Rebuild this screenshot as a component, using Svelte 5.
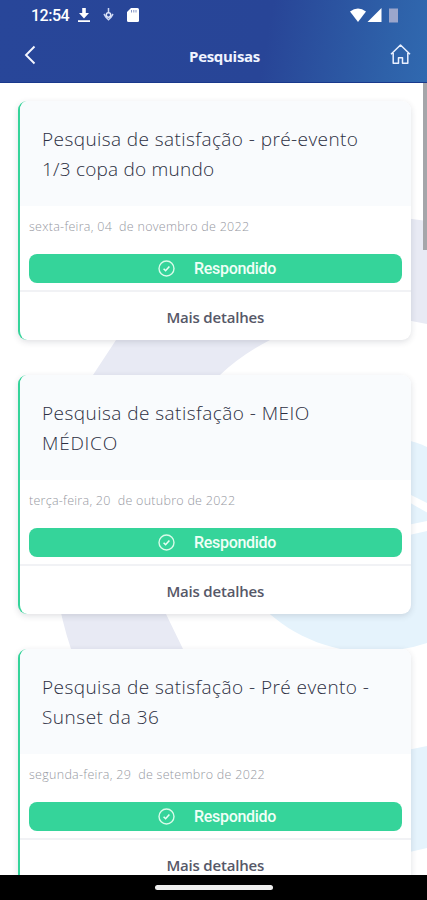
<script>
  const surveys = [
    { lines: [['Pesquisa de satisfação - pré-evento', 0.42], ['1/3 copa do mundo', 0.22]], date: 'sexta-feira, 04\u00a0 de novembro de 2022', ls: 0.28 },
    { lines: [['Pesquisa de satisfação - MEIO', 0.46], ['MÉDICO', 0.75]], date: 'terça-feira, 20\u00a0 de outubro de 2022', ls: 0.27 },
    { lines: [['Pesquisa de satisfação - Pré evento -', 0.43], ['Sunset da 36', 0.5]], date: 'segunda-feira, 29\u00a0 de setembro de 2022', ls: 0.29 },
  ];
</script>

<div class="phone">
  <header>
    <div class="status">
      <span class="time">12:54</span>
      <svg class="dl" width="12" height="15" viewBox="0 0 12 15"><path d="M4.2 0h3.6v5H11L6 10.4 1 5h3.2zM0 12.2h12V14H0z" fill="#fff" /></svg>
      <svg class="pin" width="11" height="14" viewBox="0 0 11 14"><path d="M5.5 0v5M1 6l2 3.2 2.5 2.5L8 9.200 10 6" fill="none" stroke="#cbd6f2" stroke-width="1.500" /><circle cx="5.500" cy="7" r="2.200" fill="none" stroke="#dfe6fa" stroke-width="1.500" /></svg>
      <svg class="sd" width="12" height="14" viewBox="0 0 12 14"><path d="M4 0h6.500Q12 0 12 1.500v11Q12 14 10.500 14h-9Q0 14 0 12.500V4z" fill="#fff" /><path d="M4.500 2v2.500M6.800 2v2.500M9 2v2.500" stroke="#8494c4" /></svg>
      <span class="grow"></span>
      <svg width="48" height="15" viewBox="0 0 48 15"><path d="M0 3.500Q8 -2.500 16 3.500L8 14z" fill="#fff" /><path d="M31.500 0v14H17.500z" fill="#fff" /><path d="M39 .5h9V14.500h-9z" fill="#9ba6cc" /></svg>
    </div>
    <div class="bar">
      <svg width="12" height="20" viewBox="0 0 12 20"><path d="M10.500 1.500 2 10l8.500 8.500" fill="none" stroke="#f5f7ff" stroke-width="1.900" /></svg>
      <h1>Pesquisas</h1>
      <svg class="home" width="21" height="20" viewBox="0 0 21 20"><path d="M1 10.200 10.500 1 20 10.200M3.200 9v10.200h5.300v-5.500h4v5.500h5.300V9" fill="none" stroke="#e9f0ff" stroke-width="1.500" stroke-linejoin="round" /></svg>
    </div>
  </header>

  <main>
    <svg class="backdrop" width="427" height="792" viewBox="0 83 427 792">
      <path d="M427 221C290 200 167 254 116 340L93 375C44 457 42 562 71 649L110 725H230L183 649 166 614C131 520 152 435 220 375Q241 355 270 340C322 312 375 313 427 324z" fill="#e8eaf4" />
      <path d="M427 447C370 420 255 450 232 515C215 580 285 649 365 652Q401 652 427 643z" fill="#e5f3fc" />
      <path d="M405 492 427 503v9.500L405 500zM405 525.500 427 521v10l-22 5z" fill="#fff" />
      <path d="M427 746Q350 760 290 800V850Q350 868 427 848z" fill="#e5f3fc" />
    </svg>
    <div class="list">
      {#each surveys as survey}
        <article>
          <h2>
            {#each survey.lines as line}
              <span style="letter-spacing:{line[1]}px">{line[0]}</span>
            {/each}
          </h2>
          <div class="body">
            <time style="letter-spacing:{survey.ls}px">{survey.date}</time>
            <div class="answered">
              <svg width="17" height="17" viewBox="0 0 17 17"><circle cx="8.500" cy="8.500" r="7.500" fill="none" stroke="#d9fbe9" stroke-width="1.400" /><path d="m5.600 8.700 2 2 3.800-4.200" fill="none" stroke="#e9fff4" stroke-width="1.600" /></svg>
              <span>Respondido</span>
            </div>
          </div>
          <div class="more">Mais detalhes</div>
        </article>
      {/each}
    </div>
    <i class="scroll"></i>
  </main>
  <footer><i></i></footer>
</div>

<style>
  .phone { width: 427px; height: 900px; display: flex; flex-direction: column; overflow: hidden; background: #fff; font-family: "Open Sans", "Noto Sans", sans-serif; }
  header { height: 83px; flex: none; box-sizing: border-box; color: #fff; background: linear-gradient(100deg, #284699 0%, #284597 62%, #2e61a9 90%, #3069b0 100%); border-bottom: 1px solid #19398c; }
  .status { height: 30px; display: flex; align-items: center; padding: 0 29px 0 31px; box-sizing: border-box; }
  .time { font: 500 16px Roboto, sans-serif; width: 38px; letter-spacing: -.5px; }
  .dl { margin-left: 9px; }
  .pin { margin-left: 13px; }
  .sd { margin-left: 13px; }
  .grow { flex: 1; }
  .bar { height: 50px; display: flex; align-items: center; padding: 0 16px 0 24px; }
  .home { margin-top: -3px; }
  h1 { flex: 1; margin: 1px 0 0; padding-left: 23px; text-align: center; font: 700 15px "Open Sans", sans-serif; letter-spacing: -.3px; color: #f0f4ff; }
  main { position: relative; height: 792px; flex: none; overflow: hidden; }
  .backdrop { position: absolute; inset: 0; }
  .list { position: relative; display: flex; flex-direction: column; gap: 35px; padding: 18px 16.500px 0 18px; }
  article { height: 239px; flex: none; box-sizing: border-box; border-left: 2px solid #35d49a; border-radius: 9px; background: #fff; overflow: hidden; box-shadow: 0 2px 6px rgba(40, 45, 70, .15); display: flex; flex-direction: column; }
  h2 { margin: 0; height: 105px; box-sizing: border-box; padding: 22.500px 0 0 22px; background: #f9fbfd; font-size: 19px; line-height: 30.400px; font-weight: 330; color: #2c2f42; display: flex; flex-direction: column; align-items: flex-start; white-space: nowrap; }
  .body { height: 86px; box-sizing: border-box; padding: 12px 9px 0; border-bottom: 2px solid #f1f2f5; }
  time { display: block; height: 18px; line-height: 18px; margin-bottom: 17.500px; font-size: 12.500px; color: #96989f; font-weight: 300; white-space: nowrap; }
  .answered { height: 29px; border-radius: 8px; background: #35d49a; display: flex; align-items: center; padding-left: 129px; gap: 19px; color: #f0fff7; font: 500 16px Roboto, sans-serif; letter-spacing: -.3px; }
  .more { flex: 1; display: flex; align-items: center; justify-content: center; font-size: 15px; font-weight: 600; letter-spacing: -.2px; color: #565868; padding-top: 1px; }
  .scroll { position: absolute; right: 0; top: 0; width: 4px; height: 167px; background: #a5a6aa; }
  footer { flex: 1; background: #000; display: flex; justify-content: center; padding-top: 9.500px; }
  footer i { width: 118px; height: 5px; border-radius: 3px; background: #eee; }
</style>
